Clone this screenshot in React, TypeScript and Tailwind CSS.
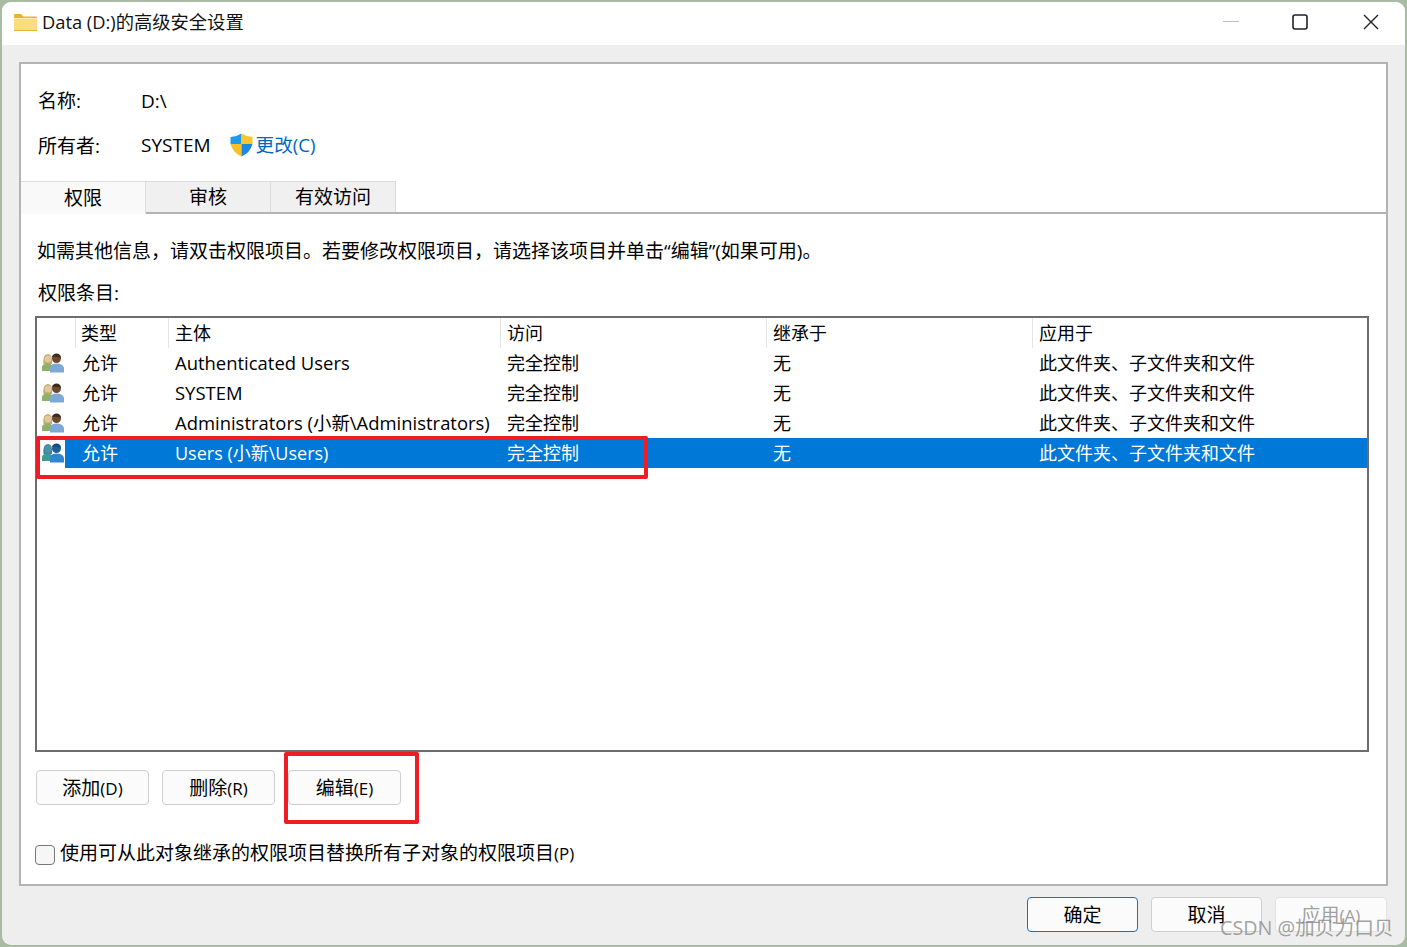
const FONT = "font-['Open_Sans','Noto_Sans_CJK_SC',sans-serif]";

function Folder() {
  return (
    <svg width="23" height="18" viewBox="0 0 23 18" className="shrink-0">
      <path d="M0 2 Q0 1 1.5 1 H7 L9.5 3.5 H22 Q23 3.5 23 5 V17 H0 Z" fill="#efb22e" />
      <rect x="0" y="5" width="23" height="13" rx="0.5" fill="#fcdc80" />
      <rect x="0" y="5" width="23" height="1" fill="#fff0b8" />
      <rect x="0" y="17" width="23" height="1" fill="#e8b440" />
    </svg>
  );
}

function Shield() {
  return (
    <svg width="23" height="24" viewBox="0 0 23 24" className="shrink-0">
      <path d="M11.5 0.5 Q6 4 0.5 4 V11 H11.5 Z" fill="#1e9be8" />
      <path d="M11.5 0.5 Q17 4 22.5 4 V11 H11.5 Z" fill="#fbc52a" />
      <path d="M0.5 11 H11.5 V23.5 Q3 20 0.5 11 Z" fill="#f9c125" />
      <path d="M22.5 11 H11.5 V23.5 Q20 20 22.5 11 Z" fill="#1a8ade" />
    </svg>
  );
}

function Users({ selected }: { selected?: boolean }) {
  const body1 = selected ? "#3f9a94" : "#8fb06a";
  const face1 = selected ? "#4b93a8" : "#e0c9a0";
  const hair1 = selected ? "#3a86a0" : "#c4a868";
  const face2 = selected ? "#1f5f96" : "#6e4a30";
  const hair2 = selected ? "#174a80" : "#3d2a1c";
  const body2 = selected ? "#2f86d0" : "#7ea8d6";
  return (
    <svg width="22" height="20" viewBox="0 0 22 20" className="shrink-0">
      <path d="M1.5 11 Q0.5 1 6 1 Q11 1 10 11 Z" fill={hair1} />
      <circle cx="6" cy="6" r="3.5" fill={face1} />
      <path d="M0 18 V14 Q0.5 10.5 5.5 10.5 Q10.5 10.5 10.5 14 V18 Z" fill={body1} />
      <circle cx="14.5" cy="5.5" r="4.5" fill={face2} />
      <path d="M10 4 Q11 0.5 14.5 0.5 Q18.5 0.5 19 5 Q15 3 10 4 Z" fill={hair2} />
      <path d="M8 19.5 V14.5 Q9 10.5 14.5 10.5 Q21 10.5 22 15 V19.5 Z" fill={body2} />
    </svg>
  );
}

const rows = ["Authenticated Users", "SYSTEM", "Administrators (小新\\Administrators)", "Users (小新\\Users)"];

function Row({ name, selected }: { name: string; selected?: boolean }) {
  return (
    <div className="flex h-[30px] items-center">
      <div className="flex h-full w-[28px] shrink-0 items-center justify-center bg-white pl-[3px]">
        <Users selected={selected} />
      </div>
      <div className={`flex h-full flex-1 items-center ${selected ? "bg-[#0078d7] text-white" : "text-black"}`}>
        <div className="w-[110px] shrink-0 pl-[17px]">允许</div>
        <div className={`w-[332px] shrink-0 whitespace-nowrap ${selected ? "text-[18px]" : "text-[18.45px]"}`}>{name}</div>
        <div className="w-[266px] shrink-0">完全控制</div>
        <div className="w-[266px] shrink-0">无</div>
        <div className="whitespace-nowrap">此文件夹、子文件夹和文件</div>
      </div>
    </div>
  );
}

function Btn({ children, className = "" }: { children: React.ReactNode; className?: string }) {
  return (
    <div className={`flex h-[35px] items-center justify-center rounded-[4px] border bg-[#fbfbfb] pt-[1px] ${className}`}>
      {children}
    </div>
  );
}

function Key({ children }: { children: React.ReactNode }) {
  return <span className="text-[17px]">{children}</span>;
}

function Head({ className, children }: { className: string; children?: React.ReactNode }) {
  return <div className={`flex h-[30px] items-center ${className}`}>{children}</div>;
}

export default function App() {
  return (
    <div className={`${FONT} h-[947px] w-[1407px] overflow-hidden bg-[#a9bba3] text-[19px] leading-none text-black`}>
      <div className="relative ml-[2px] flex h-[943px] w-[1403px] translate-y-[2px] flex-col overflow-hidden rounded-[9px] bg-[#eeeeee]">
        <div className="flex h-[43px] shrink-0 items-center bg-white pb-[3px] pl-[12px]">
          <Folder />
          <span className="ml-[5px] text-[18.3px] text-[#111]">Data (D:)的高级安全设置</span>
          <div className="ml-auto flex items-center">
            <svg width="16" height="2" className="mr-[53px]"><rect width="16" height="1" fill="#bdbdbd" /></svg>
            <svg width="16" height="16" viewBox="0 0 16 16" className="mr-[55px]"><rect x="1" y="1" width="14" height="14" rx="2" fill="none" stroke="#222" strokeWidth="1.6" /></svg>
            <svg width="16" height="16" viewBox="0 0 16 16" className="mr-[26px]"><path d="M1 1 L15 15 M15 1 L1 15" stroke="#222" strokeWidth="1.4" /></svg>
          </div>
        </div>

        <div className="ml-[17px] mt-[17px] flex h-[824px] w-[1369px] flex-col border-2 border-[#b4b4b4] bg-white">
          <div className="mt-[4px] flex h-[44px] items-end pb-[1px] pl-[17px]">
            <span className="w-[103px]">名称:</span>
            <span>D:\</span>
          </div>
          <div className="mt-[16px] flex h-[34px] items-center pl-[17px]">
            <span className="w-[103px] pt-[2px]">所有者:</span>
            <span>SYSTEM</span>
            <span className="ml-[19px]"><Shield /></span>
            <span className="ml-[3px] text-[18.6px] text-[#0067c0]">更改(C)</span>
          </div>

          <div className="mt-[19px] flex h-[33px] border-b-2 border-[#b4b4b4]">
            <div className="relative z-10 flex h-[33px] w-[125px] items-center justify-center border-t border-r border-[#dddddd] bg-[#f9f9f9] pt-[1px]">权限</div>
            <div className="flex h-[31px] w-[125px] items-center justify-center border-t border-r border-[#dddddd] bg-[#f0f0f0]">审核</div>
            <div className="flex h-[31px] w-[125px] items-center justify-center border-t border-r border-[#dddddd] bg-[#f0f0f0]">有效访问</div>
          </div>

          <div className="mt-[28px] whitespace-nowrap pl-[16px]">如需其他信息，请双击权限项目。若要修改权限项目，请选择该项目并单击“编辑”(如果可用)。</div>
          <div className="mt-[23px] pl-[17px]">权限条目:</div>

          <div className="ml-[14px] mt-[13px] h-[436px] w-[1334px] border-2 border-[#6d6d6d] bg-white text-[18px]">
            <div className="flex">
              <Head className="w-[39px] border-r border-[#e5e5e5]" />
              <Head className="w-[93px] border-r border-[#e5e5e5] pl-[5px]">类型</Head>
              <Head className="w-[332px] border-r border-[#e5e5e5] pl-[6px]">主体</Head>
              <Head className="w-[266px] border-r border-[#e5e5e5] pl-[6px]">访问</Head>
              <Head className="w-[266px] border-r border-[#e5e5e5] pl-[6px]">继承于</Head>
              <Head className="flex-1 pl-[6px]">应用于</Head>
            </div>
            {rows.map((name, i) => (
              <Row key={name} name={name} selected={i === 3} />
            ))}
          </div>

          <div className="ml-[15px] mt-[18px] flex gap-[13px]">
            <Btn className="w-[113px] border-[#cfcfcf]">添加<Key>(D)</Key></Btn>
            <Btn className="w-[113px] border-[#cfcfcf]">删除<Key>(R)</Key></Btn>
            <Btn className="w-[113px] border-[#cfcfcf]">编辑<Key>(E)</Key></Btn>
          </div>

          <div className="ml-[14px] mt-[38px] flex items-center">
            <div className="h-[20px] w-[20px] translate-y-[2px] rounded-[4px] border border-[#777] bg-[#f6f6f6]" />
            <span className="ml-[5px] whitespace-nowrap">使用可从此对象继承的权限项目替换所有子对象的权限项目<Key>(P)</Key></span>
          </div>
        </div>

        <div className="mr-[18px] mt-[11px] flex justify-end gap-[13px]">
          <Btn className="w-[111px] border-[#0078d4]">确定</Btn>
          <Btn className="w-[111px] border-[#cfcfcf]">取消</Btn>
          <Btn className="w-[112px] border-[#e2e2e2] text-[#a0a0a0]">应用<Key>(A)</Key></Btn>
        </div>

        <div className="absolute left-[34px] top-[434px] h-[43px] w-[612px] rounded-[2px] border-[4px] border-[#ee1c25]" />
        <div className="absolute left-[282px] top-[750px] h-[72px] w-[135px] rounded-[2px] border-[4px] border-[#ee1c25]" />
        <div className="absolute left-[1218px] top-[916px] whitespace-nowrap text-[19.7px] text-[#8a8a8a]/80">CSDN @加贝力口贝</div>
      </div>
    </div>
  );
}
